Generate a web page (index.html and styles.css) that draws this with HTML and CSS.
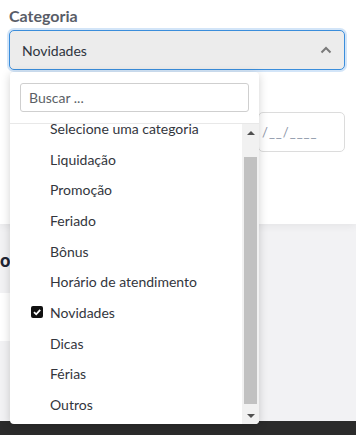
FILE: index.html
```html
<!DOCTYPE html>
<html lang="pt-BR">
<head>
  <meta charset="UTF-8" />
  <meta name="viewport" content="width=device-width, initial-scale=1.0" />
  <title>Categoria</title>
  <link rel="stylesheet" href="styles.css">
</head>
<body>

  <div class="main">
    <div class="card">
      <label class="field-label">Categoria</label>
      <div class="select">
        <span>Novidades</span>
        <svg class="chevron" width="12" height="8" viewBox="0 0 12 8">
          <polyline points="1.5,6.5 6,2 10.5,6.5" fill="none" stroke="#7a7a7a" stroke-width="2" />
        </svg>
      </div>
      <div class="row">
        <div class="date-input">/__/____</div>
      </div>
    </div>

    <h3 class="section-title">o</h3>
    <div class="table-card"></div>
  </div>

  <div class="footer"></div>

  <!-- dropdown aberto -->
  <div class="dropdown">
    <div class="search">
      <input type="text" placeholder="Buscar ..." />
    </div>
    <div class="list-wrap">
      <div class="list">
        <ul>
          <li><span class="mark"></span>Selecione uma categoria</li>
          <li><span class="mark"></span>Liquidação</li>
          <li><span class="mark"></span>Promoção</li>
          <li><span class="mark"></span>Feriado</li>
          <li><span class="mark"></span>Bônus</li>
          <li><span class="mark"></span>Horário de atendimento</li>
          <li class="selected">
            <span class="mark">
              <svg width="12" height="12" viewBox="0 0 12 12">
                <rect width="12" height="12" rx="2" fill="#111" />
                <polyline points="3,6.2 5.2,8.3 9.2,3.8" fill="none" stroke="#fff" stroke-width="1.8" />
              </svg>
            </span>Novidades
          </li>
          <li><span class="mark"></span>Dicas</li>
          <li><span class="mark"></span>Férias</li>
          <li><span class="mark"></span>Outros</li>
        </ul>
      </div>
      <div class="scrollbar">
        <div class="arrow up"></div>
        <div class="track"><div class="thumb"></div></div>
        <div class="arrow down"></div>
      </div>
    </div>
  </div>

</body>
</html>
```

FILE: styles.css
```css
* {
  box-sizing: border-box;
  margin: 0;
  font-family: 'Lato', 'Liberation Sans', sans-serif;
}

body {
  display: flex;
  flex-direction: column;
  height: 100vh;
  background-color: #f2f2f4;
  overflow: hidden;
}

.main {
  flex: 1;
  display: flex;
  flex-direction: column;
}

.card {
  height: 224px;
  background: #fff;
  padding: 6px 11px 0 9px;
  box-shadow: 0 2px 8px rgba(0,0,0,0.06);
}

.field-label {
  display: block;
  font-size: 16px;
  font-weight: 700;
  color: #595d68;
  height: 24px;
}

.select {
  display: flex;
  align-items: center;
  justify-content: space-between;
  height: 40px;
  background: #ececec;
  border: 1px solid #3a8ddb;
  border-radius: 5px;
  box-shadow: 0 0 0 2px #d3e5f8;
  padding: 0 12px 0 12px;
  font-size: 14px;
  color: #2e3440;
}

.row {
  display: flex;
  justify-content: flex-end;
  margin-top: 42px;
}

.date-input {
  width: 87px;
  height: 40px;
  border: 1px solid #dcdcdc;
  border-radius: 5px;
  padding: 11px 0 0 3px;
  font-size: 13px;
  color: #8a94a6;
  letter-spacing: 1px;
}

.section-title {
  margin-top: 26px;
  height: 43px;
  font-size: 18px;
  font-weight: 900;
  color: #1f2533;
  line-height: 20px;
}

.table-card {
  width: 200px;
  height: 48px;
  background: #fff;
}

.footer {
  height: 14px;
  background: #2b2b2b;
}

.dropdown {
  position: absolute;
  left: 10px;
  top: 72px;
  width: 249px;
  height: 352px;
  background: #fff;
  border-radius: 4px;
  box-shadow: 0 2px 10px rgba(0,0,0,0.18);
  display: flex;
  flex-direction: column;
  overflow: hidden;
}

.search {
  padding: 11px 10px 11px 10px;
}

.search input {
  width: 100%;
  height: 29px;
  border: 1px solid #cfcfcf;
  border-radius: 3px;
  padding: 0 8px;
  font-size: 14px;
  outline: none;
}

.search input::placeholder {
  color: #5b5f66;
}

.list-wrap {
  flex: 1;
  display: flex;
  border-top: 1px solid #e8e8e8;
  min-height: 0;
}

.list {
  flex: 1;
  overflow: hidden;
}

.list ul {
  list-style: none;
  padding: 0;
  margin-top: -11px;
}

.list li {
  display: flex;
  align-items: center;
  height: 30.7px;
  padding-left: 21px;
  font-size: 14px;
  color: #33363d;
}

.mark {
  display: flex;
  width: 12px;
  height: 12px;
  margin-right: 7px;
}

.scrollbar {
  width: 17px;
  background: #f1f1f1;
  display: flex;
  flex-direction: column;
}

.arrow {
  height: 17px;
  display: flex;
  align-items: center;
  justify-content: center;
}

.arrow.up::before {
  content: "";
  border-left: 4px solid transparent;
  border-right: 4px solid transparent;
  border-bottom: 4px solid #505050;
}

.arrow.down::before {
  content: "";
  border-left: 4px solid transparent;
  border-right: 4px solid transparent;
  border-top: 4px solid #505050;
}

.track {
  flex: 1;
  padding: 16px 2px 3px 2px;
}

.thumb {
  height: 100%;
  background: #c1c1c1;
}
```
